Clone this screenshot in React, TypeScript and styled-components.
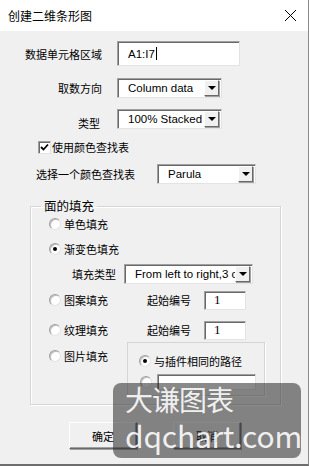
import React from 'react';
import styled, { createGlobalStyle } from 'styled-components';

const GlobalStyle = createGlobalStyle`
  html, body {
    margin: 0;
    padding: 0;
    background: #ffffff;
  }
  body {
    font-family: "Noto Sans CJK SC", "Noto Sans", sans-serif;
    font-size: 11px;
    line-height: 16px;
    color: #000;
  }
`;

const Window = styled.div`
  position: relative;
  width: 309px;
  height: 466px;
  box-sizing: border-box;
  background: #f0f0f0;
  border-right: 1px solid #8a8a8a;
  border-bottom: 2px solid #6d6d6d;
  overflow: hidden;
`;

const TitleBar = styled.div`
  height: 31px;
  background: #ffffff;
  display: flex;
  align-items: center;
  justify-content: space-between;
  padding: 0 11px 0 8px;
  font-size: 12px;
`;

const Body = styled.div`
  display: flex;
  flex-direction: column;
`;

const Row = styled.div<{ $mt: number; $pl?: number }>`
  display: flex;
  align-items: center;
  margin-top: ${(p) => p.$mt}px;
  padding-left: ${(p) => p.$pl ?? 0}px;
`;

const Label = styled.div<{ $w: number; $right?: boolean; $dy?: number }>`
  width: ${(p) => p.$w}px;
  text-align: ${(p) => (p.$right ? 'right' : 'left')};
  white-space: nowrap;
  transform: translateY(${(p) => p.$dy ?? 0}px);
  flex-shrink: 0;
`;

const TextInput = styled.div<{ $w: number; $h: number }>`
  width: ${(p) => p.$w}px;
  height: ${(p) => p.$h}px;
  box-sizing: border-box;
  background: #ffffff;
  border: 1px solid #a0a0a0;
  border-right-color: #e3e3e3;
  border-bottom-color: #e3e3e3;
  box-shadow: inset 1px 1px 0 #696969;
  display: flex;
  align-items: center;
  padding-left: 10px;
  font-family: "Liberation Sans", "Noto Sans", sans-serif;
  font-size: 11.5px;
  flex-shrink: 0;
`;

const Caret = styled.span`
  display: inline-block;
  width: 1px;
  height: 13px;
  background: #000;
  margin-left: 1px;
`;

const Combo = styled.div<{ $w: number; $ml: number }>`
  width: ${(p) => p.$w}px;
  height: 20px;
  margin-left: ${(p) => p.$ml}px;
  box-sizing: border-box;
  background: #ffffff;
  border: 1px solid #a0a0a0;
  border-right-color: #e3e3e3;
  border-bottom-color: #e3e3e3;
  box-shadow: inset 1px 1px 0 #696969;
  display: flex;
  align-items: center;
  padding: 0 1px 0 10px;
  font-family: "Liberation Sans", "Noto Sans", sans-serif;
  font-size: 11.5px;
  flex-shrink: 0;
`;

const ComboText = styled.span`
  flex: 1;
  overflow: hidden;
  white-space: nowrap;
`;

const DropButton = styled.div`
  width: 15px;
  height: 16px;
  box-sizing: border-box;
  background: #f0f0f0;
  border: 1px solid #ffffff;
  border-right-color: #696969;
  border-bottom-color: #696969;
  box-shadow: 1px 1px 0 #a0a0a0;
  display: flex;
  align-items: center;
  justify-content: center;
  flex-shrink: 0;
  margin-right: 1px;
`;

const Arrow = styled.div`
  width: 0;
  height: 0;
  border-left: 4px solid transparent;
  border-right: 4px solid transparent;
  border-top: 4px solid #000;
`;

const CheckBox = styled.div`
  width: 13px;
  height: 13px;
  box-sizing: border-box;
  background: #fff;
  border: 1px solid #a0a0a0;
  border-right-color: #e3e3e3;
  border-bottom-color: #e3e3e3;
  box-shadow: inset 1px 1px 0 #696969;
  display: flex;
  align-items: center;
  justify-content: center;
  margin-right: 1px;
`;

const Group = styled.fieldset<{ $w: number; $h: number; $ml: number; $mt: number }>`
  width: ${(p) => p.$w}px;
  height: ${(p) => p.$h}px;
  margin: ${(p) => p.$mt}px 0 0 ${(p) => p.$ml}px;
  padding: 0;
  box-sizing: border-box;
  border: 1px solid #d5d5d5;
  border-radius: 0;
  box-shadow: 1px 1px 0 #ffffff, inset 1px 1px 0 #ffffff;
  min-width: 0;
`;

const Legend = styled.legend`
  margin-left: 10px;
  padding: 0 3px;
  font-size: 12.5px;
  line-height: 16px;
`;

const RadioRow = styled.div<{ $mt: number; $pl: number }>`
  display: flex;
  align-items: center;
  height: 20px;
  margin-top: ${(p) => p.$mt}px;
  padding-left: ${(p) => p.$pl}px;
`;

const RadioCircle = styled.div<{ $on?: boolean }>`
  width: 12px;
  height: 12px;
  box-sizing: border-box;
  border-radius: 50%;
  background: #fff;
  border: 1px solid #a0a0a0;
  border-right-color: #e3e3e3;
  border-bottom-color: #e3e3e3;
  box-shadow: inset 1px 1px 0 #bdbdbd;
  display: flex;
  align-items: center;
  justify-content: center;
  margin-right: 3px;
  flex-shrink: 0;
  &::after {
    content: '';
    display: ${(p) => (p.$on ? 'block' : 'none')};
    width: 4px;
    height: 4px;
    border-radius: 50%;
    background: #000;
  }
`;

const SmallInput = styled.div`
  width: 42px;
  height: 19px;
  box-sizing: border-box;
  background: #fff;
  border: 1px solid #a0a0a0;
  border-right-color: #e3e3e3;
  border-bottom-color: #e3e3e3;
  box-shadow: inset 1px 1px 0 #696969;
  display: flex;
  align-items: center;
  padding-left: 9px;
  font-family: "Liberation Serif", serif;
  font-size: 13px;
  margin-left: 13px;
`;

const PictureRow = styled.div`
  display: flex;
  align-items: flex-start;
  margin-top: 2px;
  padding-left: 18px;
`;

const InnerGroup = styled.div`
  width: 138px;
  height: 54px;
  box-sizing: border-box;
  border: 1px solid #d5d5d5;
  box-shadow: 1px 1px 0 #ffffff;
  margin-left: 7px;
  display: flex;
  flex-direction: column;
`;

const PathInput = styled.div`
  width: 99px;
  height: 16px;
  box-sizing: border-box;
  background: #fff;
  border: 1px solid #a0a0a0;
  border-right-color: #e3e3e3;
  border-bottom-color: #e3e3e3;
  box-shadow: inset 1px 1px 0 #696969;
  margin-left: 2px;
`;

const ButtonBar = styled.div`
  display: flex;
  gap: 36px;
  padding-left: 69px;
  margin-top: 17px;
`;

const Button = styled.div`
  width: 68px;
  height: 27px;
  box-sizing: border-box;
  background: #f0f0f0;
  border: 1px solid #ffffff;
  border-right-color: #696969;
  border-bottom-color: #696969;
  box-shadow: 1px 1px 0 #a0a0a0, inset -1px -1px 0 #a0a0a0;
  display: flex;
  align-items: center;
  justify-content: center;
  font-size: 11px;
`;

const Watermark = styled.div`
  position: absolute;
  left: 113px;
  top: 383px;
  width: 188px;
  height: 75px;
  border-radius: 8px;
  background: rgba(40, 40, 40, 0.55);
  color: rgba(255, 255, 255, 0.9);
  display: flex;
  flex-direction: column;
  padding-left: 12px;
  box-sizing: border-box;
`;

const MarkCn = styled.div`
  font-size: 28px;
  line-height: 32px;
  letter-spacing: -1px;
`;

const MarkEn = styled.div`
  font-size: 30px;
  line-height: 40px;
  letter-spacing: -0.2px;
`;

const CloseIcon = () => (
  <svg width="13" height="13" viewBox="0 0 13 13">
    <path d="M1 1 L12 12 M12 1 L1 12" stroke="#000" strokeWidth="1" fill="none" />
  </svg>
);

const CheckMark = () => (
  <svg width="9" height="9" viewBox="0 0 9 9">
    <path d="M1 4 L3.5 6.5 L8 1.5" stroke="#000" strokeWidth="1.8" fill="none" />
  </svg>
);

const Dropdown = ({ text, w, ml }: { text: string; w: number; ml: number }) => (
  <Combo $w={w} $ml={ml}>
    <ComboText>{text}</ComboText>
    <DropButton>
      <Arrow />
    </DropButton>
  </Combo>
);

const Radio = ({ on, label, w = 83 }: { on?: boolean; label: string; w?: number }) => (
  <>
    <RadioCircle $on={on} />
    <Label $w={w}>{label}</Label>
  </>
);

export default function App() {
  return (
    <>
      <GlobalStyle />
      <Window>
        <TitleBar>
          <span>创建二维条形图</span>
          <CloseIcon />
        </TitleBar>
        <Body>
          <Row $mt={10}>
            <Label $w={102} $right>数据单元格区域</Label>
            <TextInput $w={123} $h={25} style={{ marginLeft: 15 }}>
              A1:I7<Caret />
            </TextInput>
          </Row>
          <Row $mt={12}>
            <Label $w={102} $right>取数方向</Label>
            <Dropdown text="Column data" w={105} ml={15} />
          </Row>
          <Row $mt={11}>
            <Label $w={100} $right $dy={4}>类型</Label>
            <Dropdown text="100% Stacked" w={105} ml={17} />
          </Row>
          <Row $mt={10} $pl={38}>
            <CheckBox>
              <CheckMark />
            </CheckBox>
            <Label $w={100}>使用颜色查找表</Label>
          </Row>
          <Row $mt={9} $pl={36}>
            <Label $w={121}>选择一个颜色查找表</Label>
            <Dropdown text="Parula" w={99} ml={0} />
          </Row>
          <Group $w={251} $h={207} $ml={30} $mt={14}>
            <Legend>面的填充</Legend>
            <RadioRow $mt={0} $pl={18}>
              <Radio label="单色填充" />
            </RadioRow>
            <RadioRow $mt={5} $pl={18}>
              <Radio on label="渐变色填充" />
            </RadioRow>
            <RadioRow $mt={5} $pl={41}>
              <Label $w={52}>填充类型</Label>
              <Dropdown text="From left to right,3 colors" w={129} ml={0} />
            </RadioRow>
            <RadioRow $mt={6} $pl={18}>
              <Radio label="图案填充" />
              <Label $w={44}>起始编号</Label>
              <SmallInput>1</SmallInput>
            </RadioRow>
            <RadioRow $mt={10} $pl={18}>
              <Radio label="纹理填充" />
              <Label $w={44}>起始编号</Label>
              <SmallInput>1</SmallInput>
            </RadioRow>
            <PictureRow>
              <RadioRow $mt={4} $pl={0}>
                <Radio label="图片填充" w={56} />
              </RadioRow>
              <InnerGroup>
                <RadioRow $mt={8} $pl={11}>
                  <Radio on label="与插件相同的路径" w={100} />
                </RadioRow>
                <RadioRow $mt={1} $pl={12}>
                  <RadioCircle />
                  <PathInput />
                </RadioRow>
              </InnerGroup>
            </PictureRow>
          </Group>
          <ButtonBar>
            <Button>确定</Button>
            <Button>取消</Button>
          </ButtonBar>
        </Body>
        <Watermark>
          <MarkCn>大谦图表</MarkCn>
          <MarkEn>dqchart.com</MarkEn>
        </Watermark>
      </Window>
    </>
  );
}
